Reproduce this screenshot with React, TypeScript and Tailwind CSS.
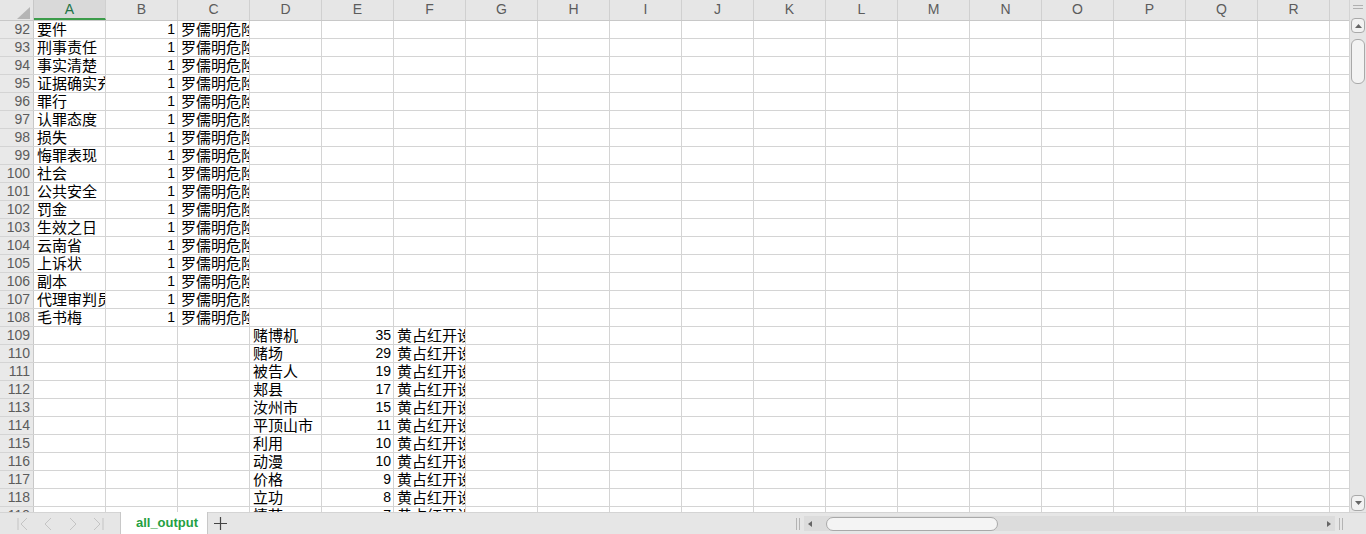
import React from "react";

const COLS = ["A","B","C","D","E","F","G","H","I","J","K","L","M","N","O","P","Q","R"];

type Row = { n: number; a?: string; b?: string; c?: string; d?: string; e?: string; f?: string };

const top = ["要件","刑事责任","事实清楚","证据确实充分","罪行","认罪态度","损失","悔罪表现","社会","公共安全","罚金","生效之日","云南省","上诉状","副本","代理审判员","毛书梅"];
const bottom: [string, string][] = [
  ["赌博机","35"],["赌场","29"],["被告人","19"],["郏县","17"],["汝州市","15"],
  ["平顶山市","11"],["利用","10"],["动漫","10"],["价格","9"],["立功","8"],["情节","7"],
];

const rows: Row[] = [
  ...top.map((a, i) => ({ n: 92 + i, a, b: "1", c: "罗儒明危险驾驶罪" })),
  ...bottom.map(([d, e], i) => ({ n: 109 + i, d, e, f: "黄占红开设赌场罪" })),
];

const font = { fontFamily: '"Liberation Sans", "Noto Sans CJK SC", sans-serif' };

function Cell({ text, num }: { text?: string; num?: boolean }) {
  return (
    <div className={`w-[72px] shrink-0 h-full border-r border-[#d4d4d4] overflow-hidden whitespace-nowrap leading-[17px] text-black ${num ? "text-right pr-[2px] text-[14px]" : "text-left pl-[3px] text-[15px]"}`}>
      {text}
    </div>
  );
}

function GridRow({ r }: { r: Row }) {
  const cells = [r.a, r.b, r.c, r.d, r.e, r.f];
  return (
    <div className="flex h-[18px] shrink-0 border-b border-[#d4d4d4]">
      <div className="w-[34px] shrink-0 bg-[#e9e9e9] border-r border-[#c8c8c8] text-right pr-[3px] text-[14px] leading-[17px] text-[#5c5c5c]">
        {r.n}
      </div>
      {COLS.map((c, i) => (
        <Cell key={c} text={cells[i]} num={i === 1 || i === 4} />
      ))}
      <div className="w-[19px] shrink-0" />
    </div>
  );
}

function VScroll() {
  return (
    <div className="w-[17px] shrink-0 h-full bg-[#e6e6e6] flex flex-col items-center border-l border-[#d4d4d4]">
      <div className="mt-[5px] w-[10px] flex flex-col gap-[2px]">
        <div className="h-px bg-[#b0b0b0]" />
        <div className="h-px bg-[#b0b0b0]" />
      </div>
      <div className="mt-[9px] w-[14px] h-[15px] rounded-[4px] border border-[#a9a9a9] bg-[#f2f2f2] flex items-center justify-center">
        <svg width="7" height="4" viewBox="0 0 7 4"><path d="M0 4 L3.5 0 L7 4 Z" fill="#666" /></svg>
      </div>
      <div className="mt-[6px] w-[14px] h-[45px] rounded-[6px] border border-[#a9a9a9] bg-[#f3f3f3]" />
      <div className="flex-1" />
      <div className="w-[14px] h-[16px] rounded-[4px] border border-[#a9a9a9] bg-[#f2f2f2] flex items-center justify-center mb-[1px]">
        <svg width="7" height="4" viewBox="0 0 7 4"><path d="M0 0 L3.5 4 L7 0 Z" fill="#666" /></svg>
      </div>
    </div>
  );
}

function NavArrows() {
  const c = "#c4c4c4";
  return (
    <div className="flex items-center gap-[11px] pl-[16px] w-[120px]">
      <svg width="14" height="14" viewBox="0 0 14 14"><path d="M2 1 V13 M11 1 L5 7 L11 13" stroke={c} fill="none" /></svg>
      <svg width="14" height="14" viewBox="0 0 14 14"><path d="M10 1 L4 7 L10 13" stroke={c} fill="none" /></svg>
      <svg width="14" height="14" viewBox="0 0 14 14"><path d="M4 1 L10 7 L4 13" stroke={c} fill="none" /></svg>
      <svg width="14" height="14" viewBox="0 0 14 14"><path d="M3 1 L9 7 L3 13 M12 1 V13" stroke={c} fill="none" /></svg>
    </div>
  );
}

function Splitter() {
  return (
    <div className="flex gap-[2px] h-[12px]">
      <div className="w-px bg-[#b4b4b4]" />
      <div className="w-px bg-[#b4b4b4]" />
    </div>
  );
}

function BottomBar() {
  return (
    <div className="h-[22px] shrink-0 flex bg-[#e6e6e6] border-t border-[#d4d4d4]" style={font}>
      <NavArrows />
      <div className="w-[88px] -mt-px h-[22px] bg-white border-x border-[#c8c8c8] flex items-center justify-center pl-[6px] text-[13px] font-bold text-[#24a042]">
        all_output
      </div>
      <div className="w-[24px] flex items-center justify-center">
        <svg width="13" height="13" viewBox="0 0 13 13"><path d="M6.5 0 V13 M0 6.5 H13" stroke="#444" strokeWidth="1.2" /></svg>
      </div>
      <div className="flex-1" />
      <div className="flex items-center gap-[4px] w-[570px]">
        <Splitter />
        <div className="flex-1 h-[15px] bg-[#dcdcdc] flex items-center px-[4px]">
          <svg width="4" height="6" viewBox="0 0 4 6"><path d="M4 0 L0 3 L4 6 Z" fill="#666" /></svg>
          <div className="ml-[14px] w-[172px] h-[14px] rounded-[7px] border border-[#a9a9a9] bg-[#f4f4f4]" />
          <div className="flex-1" />
          <svg width="4" height="6" viewBox="0 0 4 6"><path d="M0 0 L4 3 L0 6 Z" fill="#666" /></svg>
        </div>
        <Splitter />
        <div className="w-[19px]" />
      </div>
    </div>
  );
}

export default function App() {
  return (
    <div className="w-[1366px] h-[534px] flex flex-col bg-white overflow-hidden" style={font}>
      <div className="h-[512px] flex shrink-0">
        <div className="flex-1 flex flex-col overflow-hidden">
          {/* column header */}
          <div className="flex h-[21px] shrink-0 bg-[#e6e6e6] border-b border-[#c8c8c8]">
            <div className="w-[34px] shrink-0 border-r border-[#c8c8c8] relative">
              <svg className="absolute left-[17px] top-[7px]" width="13" height="12" viewBox="0 0 13 12">
                <path d="M13 0 V12 H0 Z" fill="#b5b5b5" />
              </svg>
            </div>
            {COLS.map((c, i) => (
              <div
                key={c}
                className={`w-[72px] shrink-0 border-r border-[#d0d0d0] text-center text-[14px] leading-[19px] ${i === 0 ? "text-[#217346] bg-[#d9d9d9] border-b-2 border-b-[#3c9c4a]" : "text-[#5c5c5c]"}`}
              >
                {c}
              </div>
            ))}
            <div className="w-[19px] shrink-0" />
          </div>
          {rows.map(r => <GridRow key={r.n} r={r} />)}
        </div>
        <VScroll />
      </div>
      <BottomBar />
    </div>
  );
}
